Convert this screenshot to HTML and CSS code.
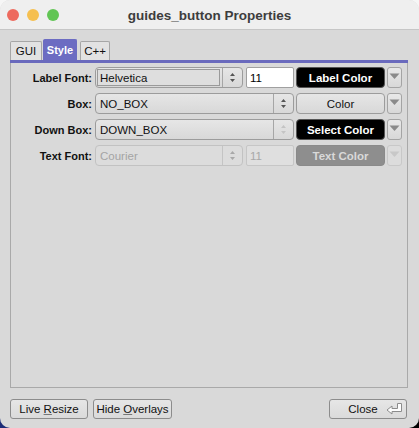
FILE: index.html
```html
<!DOCTYPE html>
<html>
<head>
<meta charset="utf-8">
<title>guides_button Properties</title>
<link rel="stylesheet" href="styles.css">
</head>
<body>
<div class="window">
  <div class="titlebar">
    <div class="lights">
      <span class="light red"></span>
      <span class="light yellow"></span>
      <span class="light green"></span>
    </div>
    <div class="title">guides_button Properties</div>
  </div>
  <div class="content">
    <div class="tabs">
      <div class="tab">GUI</div>
      <div class="tab active">Style</div>
      <div class="tab">C++</div>
    </div>
    <div class="tabbar"></div>
    <div class="panel">
      <div class="row">
        <div class="label">Label Font:</div>
        <div class="choice short">
          <span class="field framed">Helvetica</span>
          <span class="spin"><svg width="7" height="11" viewBox="0 0 7 11"><path d="M3.5 1 L6 4 L1 4 Z M1 7 L6 7 L3.5 10 Z" fill="#555"/></svg></span>
        </div>
        <div class="input">11</div>
        <div class="cbtn cb-black">Label Color</div>
        <div class="arrow"><svg width="11" height="7" viewBox="0 0 11 7"><path d="M0.5 0.5 L10.5 0.5 L5.5 6 Z" fill="#8a8a8a"/></svg></div>
      </div>
      <div class="row">
        <div class="label">Box:</div>
        <div class="choice long">
          <span class="field">NO_BOX</span>
          <span class="spin"><svg width="7" height="11" viewBox="0 0 7 11"><path d="M3.5 1 L6 4 L1 4 Z M1 7 L6 7 L3.5 10 Z" fill="#555"/></svg></span>
        </div>
        <div class="cbtn cb-light">Color</div>
        <div class="arrow"><svg width="11" height="7" viewBox="0 0 11 7"><path d="M0.5 0.5 L10.5 0.5 L5.5 6 Z" fill="#8a8a8a"/></svg></div>
      </div>
      <div class="row">
        <div class="label">Down Box:</div>
        <div class="choice long">
          <span class="field">DOWN_BOX</span>
          <span class="spin"><svg width="7" height="11" viewBox="0 0 7 11"><path d="M3.5 1 L6 4 L1 4 Z M1 7 L6 7 L3.5 10 Z" fill="#c4c4c4"/></svg></span>
        </div>
        <div class="cbtn cb-black">Select Color</div>
        <div class="arrow"><svg width="11" height="7" viewBox="0 0 11 7"><path d="M0.5 0.5 L10.5 0.5 L5.5 6 Z" fill="#8a8a8a"/></svg></div>
      </div>
      <div class="row">
        <div class="label">Text Font:</div>
        <div class="choice short disabled">
          <span class="field">Courier</span>
          <span class="spin"><svg width="7" height="11" viewBox="0 0 7 11"><path d="M3.5 1 L6 4 L1 4 Z M1 7 L6 7 L3.5 10 Z" fill="#a8a8a8"/></svg></span>
        </div>
        <div class="input disabled">11</div>
        <div class="cbtn cb-gray">Text Color</div>
        <div class="arrow disabled"><svg width="11" height="7" viewBox="0 0 11 7"><path d="M0.5 0.5 L10.5 0.5 L5.5 6 Z" fill="#c8c8c8"/></svg></div>
      </div>
    </div>
    <div class="footer">
      <div class="btn w78"><span>Live <u>R</u>esize</span></div>
      <div class="btn w79"><span>Hide <u>O</u>verlays</span></div>
      <div class="spacer"></div>
      <div class="btn w78 close">
        <span class="close-label">Close</span>
        <svg class="ret" width="17" height="12" viewBox="0 0 17 12"><path d="M11.5 0.5 H15.5 V8.5 H6 V11 L1 7 L6 3 V5.5 H11.5 Z" fill="#fdfdfd" stroke="#8c8c8c" stroke-width="1"/></svg>
      </div>
    </div>
  </div>
</div>
</body>
</html>
```
FILE: styles.css
```css
* { box-sizing: border-box; }
html, body {
  margin: 0;
  padding: 0;
  width: 419px;
  height: 428px;
  overflow: hidden;
}
body {
  background:
    linear-gradient(#f6f6f6 0 50%, transparent 50%),
    linear-gradient(to right, #1c2c78, #000);
  font-family: "Liberation Sans", Arial, sans-serif;
  font-size: 11px;
  color: #000;
}
.window {
  width: 419px;
  height: 428px;
  border-radius: 10px;
  overflow: hidden;
  background: #d9d9d9;
  display: flex;
  flex-direction: column;
}
.titlebar {
  height: 30px;
  flex: none;
  background: #efefef;
  border-bottom: 1px solid #c6c6c6;
  position: relative;
  display: flex;
  align-items: center;
  justify-content: center;
}
.lights {
  position: absolute;
  left: 7px;
  top: 9px;
  display: flex;
  gap: 8px;
}
.light {
  width: 12px;
  height: 12px;
  border-radius: 50%;
  display: block;
}
.red { background: #ed6a5e; }
.yellow { background: #f5bf4f; }
.green { background: #61c554; }
.title {
  font-weight: bold;
  font-size: 13.5px;
  color: #3d3d3d;
  margin-top: 1px;
}
.content {
  flex: 1;
  display: flex;
  flex-direction: column;
  padding: 9px 11px 9px 10px;
}
.tabs {
  height: 21px;
  display: flex;
  align-items: flex-end;
  flex: none;
}
.tab {
  height: 19px;
  padding: 0 5px;
  background: #e2e2e2;
  border: 1px solid #a6a6a6;
  border-bottom: none;
  border-radius: 2px 2px 0 0;
  display: flex;
  align-items: center;
  justify-content: center;
  font-size: 11.5px;
  color: #111;
}
.tab:nth-child(1) { width: 32px; }
.tab:nth-child(2) { width: 34px; margin-left: 1px; }
.tab:nth-child(3) { width: 30px; margin-left: 3px; }
.tab.active {
  height: 21px;
  background: #6c6cc2;
  border-color: #6c6cc2;
  color: #fff;
  font-weight: bold;
  font-size: 11px;
}
.tabbar {
  height: 3px;
  background: #6a6abd;
  flex: none;
}
.panel {
  flex: 1;
  border: 1px solid #a9a9a9;
  border-top: none;
  padding-top: 4px;
  display: flex;
  flex-direction: column;
  gap: 5px;
}
.row {
  height: 21px;
  display: flex;
  align-items: stretch;
}
.label {
  width: 81px;
  margin-right: 3px;
  text-align: right;
  font-weight: bold;
  display: flex;
  align-items: center;
  justify-content: flex-end;
  color: #111;
}
.choice {
  display: flex;
  border: 1px solid #9c9c9c;
  border-radius: 4px;
  background: linear-gradient(#e6e6e6, #d8d8d8);
}
.choice.short { width: 148px; }
.choice.long { width: 199px; }
.field {
  flex: 1;
  display: flex;
  align-items: center;
  padding-left: 4px;
  font-size: 11.5px;
  color: #111;
}
.field.framed {
  margin: 1px 2px 1px 1px;
  border: 1px solid #9a9a9a;
  background: #dedede;
  padding-left: 2px;
}
.spin {
  width: 20px;
  border-left: 1px solid #a6a6a6;
  display: flex;
  align-items: center;
  justify-content: center;
}
.choice.disabled {
  border-color: #c2c2c2;
  background: #dcdcdc;
}
.choice.disabled .field { color: #a4a4a4; }
.choice.disabled .spin { border-left-color: #c4c4c4; }
.input {
  width: 48px;
  margin-left: 3px;
  background: #fff;
  border: 1px solid #a0a0a0;
  border-radius: 2px;
  display: flex;
  align-items: center;
  padding-left: 3px;
  font-size: 11.5px;
}
.input.disabled {
  background: #dfdfdf;
  border-color: #c6c6c6;
  color: #a8a8a8;
}
.cbtn {
  width: 89px;
  margin-left: 2px;
  border-radius: 4px;
  display: flex;
  align-items: center;
  justify-content: center;
  font-size: 11.5px;
}
.cb-black {
  background: #000;
  border: 1px solid #555;
  color: #fff;
  font-weight: bold;
}
.cb-light {
  background: linear-gradient(#e6e6e6, #d8d8d8);
  border: 1px solid #9c9c9c;
  color: #111;
}
.cb-gray {
  background: #8e8e8e;
  border: 1px solid #8a8a8a;
  color: #d9d9d9;
  font-weight: bold;
}
.arrow {
  width: 15px;
  margin-left: 2px;
  border: 1px solid #a4a4a4;
  border-radius: 3px;
  background: linear-gradient(#e8e8e8, #d8d8d8);
  display: flex;
  align-items: center;
  justify-content: center;
}
.arrow svg { margin-top: -2px; }
.arrow.disabled {
  border-color: #c8c8c8;
  background: #dcdcdc;
}
.footer {
  flex: none;
  height: 20px;
  margin-top: 11px;
  display: flex;
}
.btn {
  height: 20px;
  border: 1px solid #8c8c8c;
  border-radius: 3px;
  background: linear-gradient(#e6e6e6, #dadada);
  display: flex;
  align-items: center;
  justify-content: center;
  font-size: 11.5px;
  color: #111;
}
.btn u { text-decoration-color: #777; }
.w78 { width: 78px; }
.w79 { width: 79px; margin-left: 5px; }
.spacer { flex: 1; }
.close {
  position: relative;
  margin-right: 1px;
}
.close-label { margin-right: 10px; }
.ret {
  position: absolute;
  right: 3px;
  top: 3px;
}
```
